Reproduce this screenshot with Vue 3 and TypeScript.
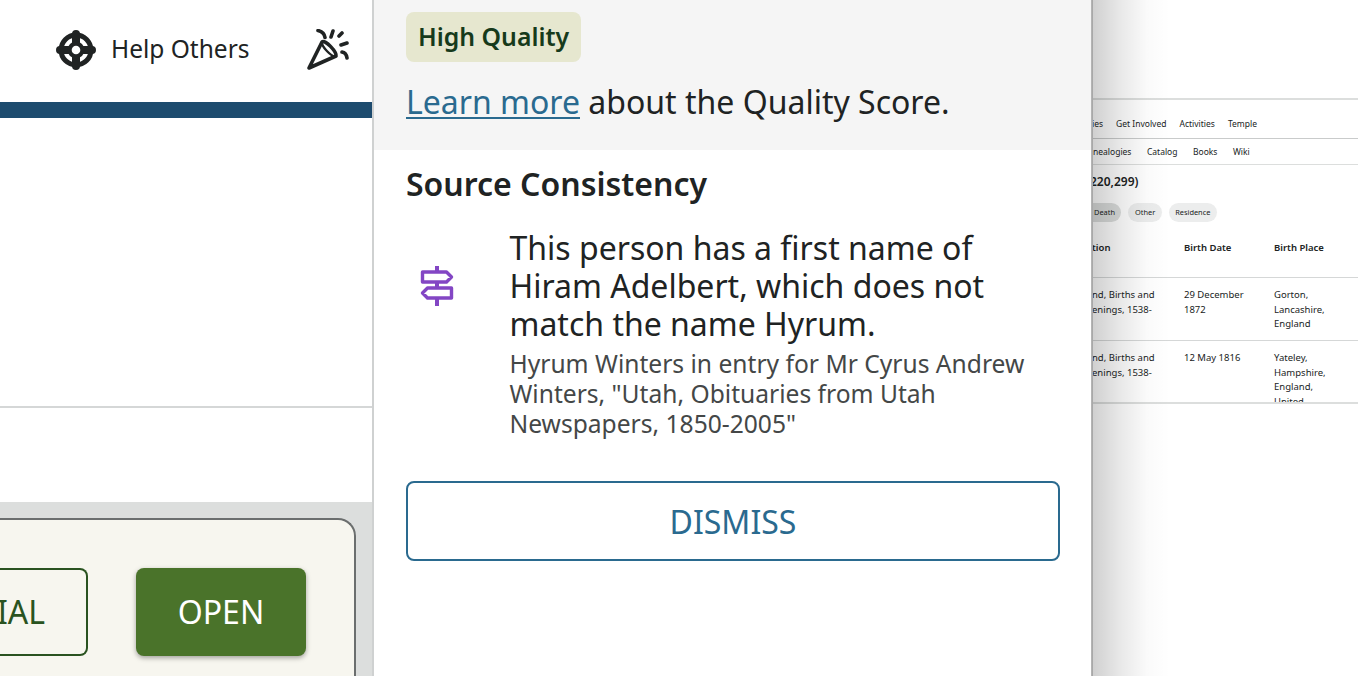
<script setup lang="ts">
const rows = [
  { c: ['nd, Births and', 'enings, 1538-'], date: ['29 December', '1872'], place: ['Gorton,', 'Lancashire,', 'England'] },
  { c: ['nd, Births and', 'enings, 1538-'], date: ['12 May 1816'], place: ['Yateley,', 'Hampshire,', 'England,', 'United'] },
]
</script>

<template>
  <div class="page">
    <section class="left">
      <header class="top">
        <div class="help">
          <svg class="help-icon" width="40" height="40" viewBox="0 0 40 40" aria-hidden="true">
            <circle cx="20" cy="20" r="15" fill="none" stroke="#202323" stroke-width="5" />
            <path d="M20 4v32M4 20h32" stroke="#202323" stroke-width="8" stroke-linecap="round" />
            <circle cx="20" cy="20" r="8.500" fill="#202323" />
            <circle cx="20" cy="20" r="4.300" fill="#fff" />
          </svg>
          <span class="help-text">Help Others</span>
        </div>
        <svg class="party" width="42" height="42" viewBox="0 0 42 42" aria-hidden="true">
          <g fill="none" stroke="#202323" stroke-width="3.600" stroke-linecap="round" stroke-linejoin="round">
            <path d="M2 39 15 13C18 10 30 23 29 27Z" />
            <path d="M15 13C14 17 25 29 29 27" stroke-width="2.400" />
            <path d="M11 1.500C15 2.500 17.500 5 18 8.500M26 2l-2 6M35 4l-3 3M40 14l-6 2M35 23c2.500.3 4.500 2.500 5 6" />
          </g>
        </svg>
      </header>
      <div class="bar"></div>
      <div class="band"></div>
      <div class="band short"></div>
      <div class="tray">
        <div class="card">
          <button class="btn outline"><span>TRIAL</span></button>
          <button class="btn solid">OPEN</button>
        </div>
      </div>
    </section>

    <main class="panel">
      <div class="quality">
        <span class="badge">High Quality</span>
        <p class="learn"><a class="link">Learn more</a> about the Quality Score.</p>
      </div>
      <div class="body">
        <h2>Source Consistency</h2>
        <div class="item">
          <svg class="sign" width="36" height="40" viewBox="0 0 36 40" aria-hidden="true">
            <path d="M18 0v6M18 17v4M18 32v8" fill="none" stroke="#8346c4" stroke-width="4" />
            <path d="M3.500 6h24l5 5-5 5h-24ZM32.500 22h-24l-5 5 5 5h24Z" fill="none" stroke="#8346c4" stroke-width="3.400" stroke-linejoin="round" />
          </svg>
          <div class="copy">
            <p class="main">This person has a first name of Hiram Adelbert, which does not match the name Hyrum.</p>
            <p class="sub">Hyrum Winters in entry for Mr Cyrus Andrew Winters, "Utah, Obituaries from Utah Newspapers, 1850-2005"</p>
          </div>
        </div>
        <button class="dismiss">DISMISS</button>
      </div>
    </main>

    <aside class="behind">
      <div class="inner">
        <nav class="nav one">
          <span>ies</span><span>Get Involved</span><span>Activities</span><span>Temple</span>
        </nav>
        <nav class="nav two">
          <span>nealogies</span><span>Catalog</span><span>Books</span><span>Wiki</span>
        </nav>
        <div class="count">220,299)</div>
        <div class="chips">
          <span class="chip dark">Death</span><span class="chip">Other</span><span class="chip">Residence</span>
        </div>
        <div class="thead">
          <b class="c1">tion</b><b class="c2">Birth Date</b><b class="c3">Birth Place</b>
        </div>
        <div v-for="(r, i) in rows" :key="i" class="row">
          <div class="c1"><div v-for="l in r.c" :key="l">{{ l }}</div></div>
          <div class="c2"><div v-for="l in r.date" :key="l">{{ l }}</div></div>
          <div class="c3"><div v-for="l in r.place" :key="l">{{ l }}</div></div>
        </div>
      </div>
      <div class="fade"></div>
    </aside>
  </div>
</template>

<style>
html, body { margin: 0; background: #fff; }
</style>

<style scoped>
.page {
  display: flex;
  width: 1358px;
  height: 676px;
  overflow: hidden;
  font-family: "Noto Sans", sans-serif;
  color: #202323;
  background: #fff;
}
.left {
  width: 372px;
  flex: none;
  display: flex;
  flex-direction: column;
  border-right: 2px solid #cfd1d1;
}
.top {
  height: 102px;
  flex: none;
  display: flex;
  align-items: flex-start;
  padding: 30px 23px 0 56px;
  box-sizing: border-box;
}
.help {
  display: flex;
  align-items: center;
  gap: 15px;
  font-size: 24.500px;
  line-height: 38px;
}
.help-text { padding-bottom: 2px; }
.help-icon { width: 40px; height: 40px; }
.party { margin: -1px 0 0 auto; }
.bar { height: 16px; background: #1d4b6e; flex: none; }
.band { flex: none; border-bottom: 2px solid #d5d7d7; box-sizing: border-box; height: 290px; }
.band.short { height: 94px; border-bottom: 0; }
.tray {
  flex: 1;
  background: #dcdedd;
  padding: 16px 16px 0 0;
  min-height: 0;
}
.card {
  height: 200px;
  background: #f7f6ef;
  border: 2px solid #6b6e6e;
  border-bottom: 0;
  border-left: 0;
  border-radius: 0 18px 0 0;
  display: flex;
  justify-content: flex-end;
  align-items: flex-start;
  gap: 48px;
  padding: 48px 48px 0 0;
  box-sizing: border-box;
}
.btn {
  height: 88px;
  border-radius: 8px;
  font: 400 32px/1 "Noto Sans", sans-serif;
  box-sizing: border-box;
  padding: 0;
}
.outline {
  width: 88px;
  background: transparent;
  border: 2px solid #2a5320;
  color: #2a5320;
  overflow: hidden;
  border-left: 0;
  border-radius: 0 8px 8px 0;
  display: flex;
  justify-content: flex-end;
  align-items: center;
  padding-right: 41px;
  white-space: nowrap;
}
.solid {
  width: 170px;
  background: #4a732a;
  border: 0;
  color: #fff;
  box-shadow: 0 2px 5px rgba(0, 0, 0, .35);
}
.panel {
  width: 718px;
  flex: none;
  box-sizing: border-box;
  border-right: 1px solid #b4b4b4;
  box-shadow: 1px 0 0 #a8a8a8;
  position: relative;
  z-index: 2;
}
.quality {
  height: 150px;
  background: #f5f5f5;
  box-sizing: border-box;
  padding: 12px 32px 0;
}
.badge {
  display: inline-block;
  background: #e6e7cf;
  color: #163a1b;
  font-size: 24.800px;
  font-weight: 600;
  line-height: 48px;
  height: 50px;
  padding: 0 12px;
  border-radius: 8px;
}
.learn {
  margin: 13px 0 0;
  font-size: 32px;
  line-height: 54px;
}
.link { color: #2a6a8f; text-decoration: underline; text-decoration-thickness: 2px; text-underline-offset: 3px; }
.body { padding: 11px 32px 0; }
h2 {
  margin: 0;
  font-size: 32px;
  font-weight: 600;
  line-height: 46px;
}
.item {
  display: flex;
  align-items: flex-start;
  margin-top: 22px;
}
.sign { margin: 37px 0 0 13px; flex: none; }
.copy { margin-left: 54.500px; width: 546px; }
.main { margin: 0; font-size: 32px; line-height: 38px; color: #202323; }
.sub { margin: 6px 0 0; font-size: 24.600px; line-height: 30px; color: #444747; }
.dismiss {
  display: block;
  width: 654px;
  height: 80px;
  margin-top: 42px;
  padding: 1px 0 0;
  background: #fff;
  border: 2px solid #2a6a8f;
  border-radius: 8px;
  color: #2a6a8f;
  font: 400 32px/1 "Noto Sans", sans-serif;
}
.behind {
  flex: 1;
  position: relative;
  overflow: hidden;
  font-size: 9.500px;
  color: #202323;
}
.inner { padding-top: 98px; height: 306px; }
.nav {
  display: flex;
  white-space: nowrap;
  align-items: center;
  font-size: 8.500px;
}
.nav.one { height: 40px; box-sizing: border-box; border-top: 2px solid #dcdedd; padding-top: 9px; gap: 13px; }
.nav.two { height: 27px; box-sizing: border-box; border-top: 1px solid #c9cbcb; border-bottom: 1px solid #dcdedd; gap: 15.500px; padding-left: 1px; }
.count { font-size: 12px; font-weight: 600; margin: 9px 0 0 -2px; line-height: 16px; }
.chips { display: flex; gap: 7px; margin: 13px 0 0 -18px; }
.chip {
  height: 19px;
  line-height: 19px;
  padding: 0 6.500px;
  border-radius: 10px;
  background: #eceded;
  font-size: 7.400px;
}
.chip.dark { background: #dcdedd; padding-left: 20px; }
.thead, .row { display: flex; }
.thead { margin-top: 17px; height: 39px; border-bottom: 1px solid #d5d7d7; box-sizing: border-box; padding-top: 2px; }
.thead b { font-weight: 600; line-height: 14px; }
.row { height: 63px; padding-top: 10px; box-sizing: border-box; border-bottom: 1px solid #d5d7d7; line-height: 14.500px; overflow: hidden; }
.c1 { width: 92px; flex: none; white-space: nowrap; }
.c2 { width: 90px; flex: none; }
.c3 { flex: 1; }
.row:last-child { border-bottom: 2px solid #dcdedd; }
.fade {
  position: absolute;
  inset: 0;
  background: linear-gradient(to right, rgba(0, 0, 0, .19), rgba(0, 0, 0, .09) 28px, rgba(0, 0, 0, .02) 55px, rgba(0, 0, 0, 0) 78px);
  pointer-events: none;
}
</style>
